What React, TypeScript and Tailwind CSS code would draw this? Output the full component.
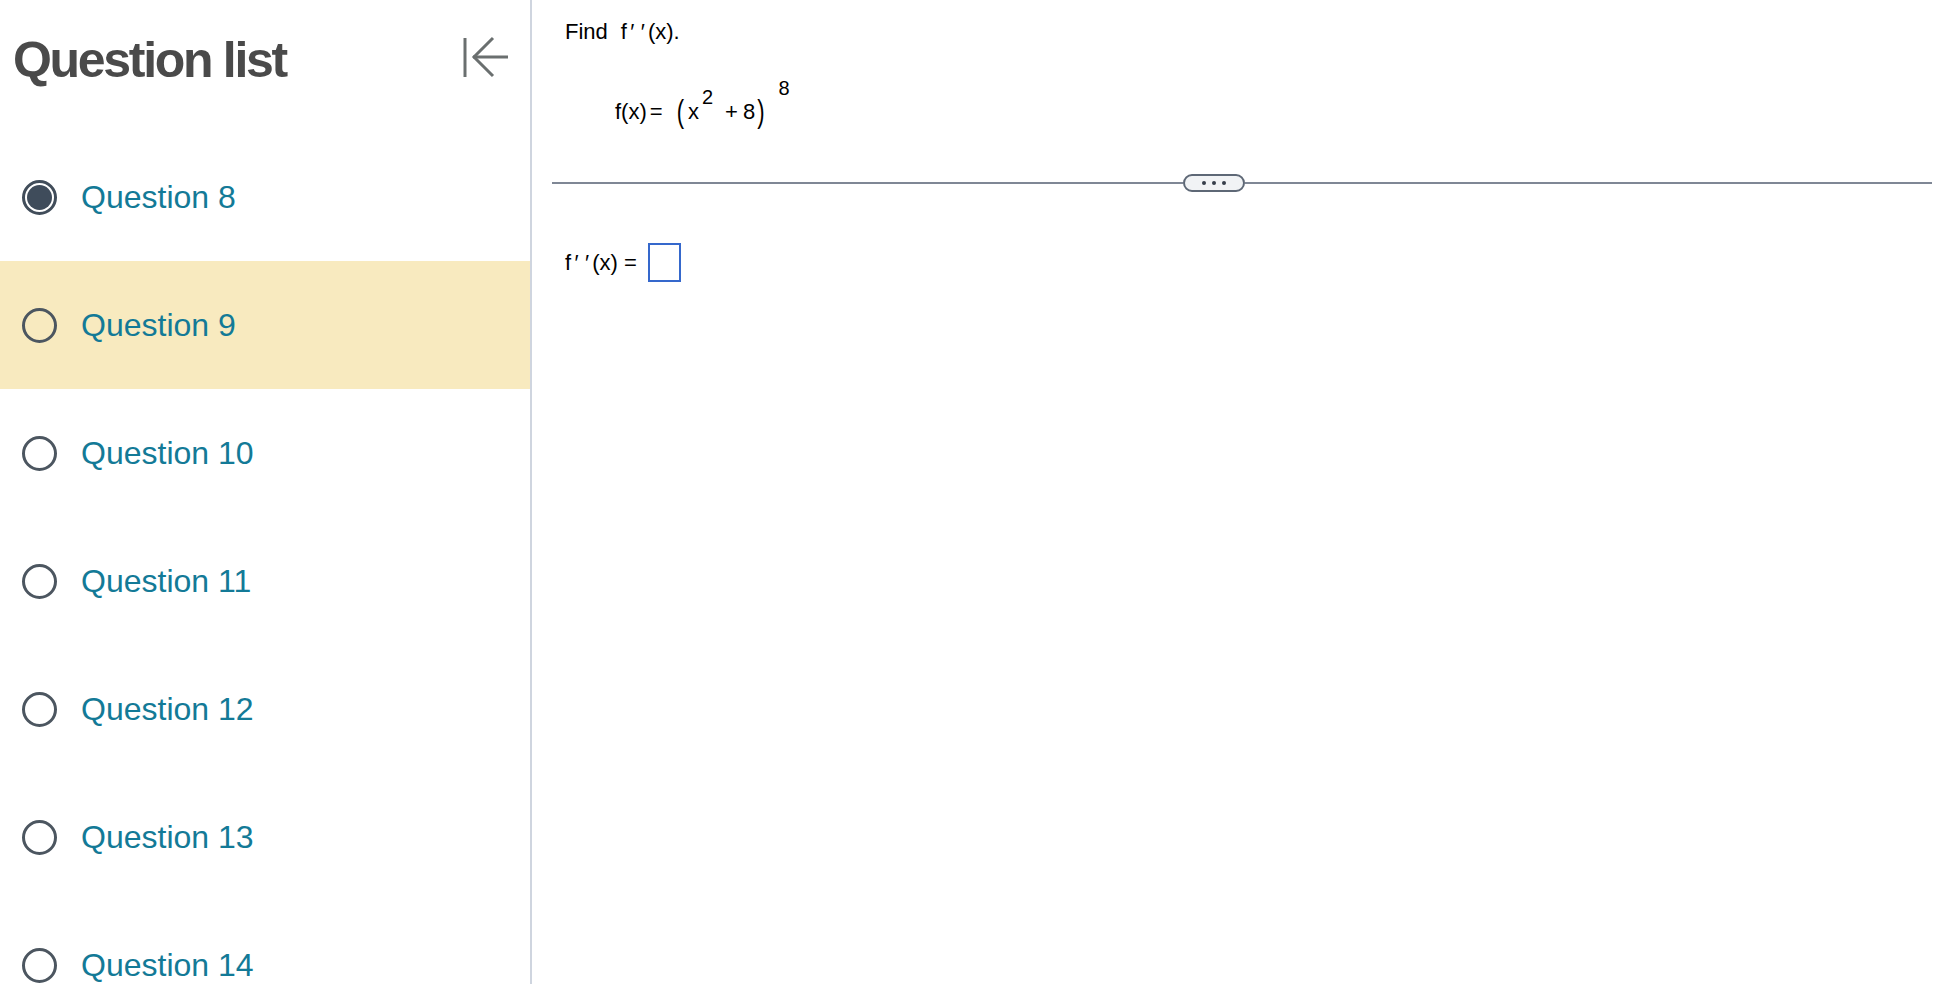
import React from "react";

const questions = [8, 9, 10, 11, 12, 13, 14];

function Radio({ checked }: { checked: boolean }) {
  if (checked) {
    return (
      <div className="flex h-[35px] w-[35px] shrink-0 rounded-full border-[3px] border-[#414d5a] bg-white p-[2px]">
        <div className="h-full w-full rounded-full bg-[#3f4c5b]" />
      </div>
    );
  }
  return <div className="h-[35px] w-[35px] shrink-0 rounded-full border-[3px] border-[#4c5660] bg-transparent" />;
}

function CollapseIcon() {
  return (
    <svg width="48" height="44" viewBox="0 0 48 44" fill="none" stroke="#6a6f6f" strokeWidth="3">
      <line x1="3" y1="3" x2="3" y2="42" />
      <line x1="11" y1="22" x2="46" y2="22" />
      <polyline points="31,3 12,22 31,41" />
    </svg>
  );
}

// f with two separated prime marks, as the math renderer draws it
function FPrimePrime() {
  return (
    <>
      f<span className="inline-block w-[11px] text-center">′</span>
      <span className="inline-block w-[10px] text-center">′</span>
    </>
  );
}

export default function App() {
  return (
    <div className="flex h-[984px] w-[1944px] overflow-hidden bg-white font-['Liberation_Sans',Arial,sans-serif]">
      {/* Sidebar */}
      <aside className="flex w-[532px] shrink-0 flex-col border-r-2 border-[#cfd5df]">
        <div className="flex h-[133px] shrink-0 items-start justify-between pl-[13px] pr-[20px]">
          <h1 className="pt-[35px] text-[50px] font-bold leading-none tracking-[-2.3px] text-[#4a4a4a]">
            Question list
          </h1>
          <div className="mt-[35px]">
            <CollapseIcon />
          </div>
        </div>
        {questions.map((q) => (
          <div
            key={q}
            className={`flex h-[128px] shrink-0 items-center gap-[24px] pl-[22px] ${
              q === 9 ? "bg-[#f8eabf]" : ""
            }`}
          >
            <Radio checked={q === 8} />
            <span className="text-[32px] leading-none text-[#137a97]">Question {q}</span>
          </div>
        ))}
      </aside>

      {/* Question pane */}
      <main className="flex flex-1 flex-col pl-[20px] pr-[12px] text-black">
        <p className="pl-[13px] pt-[19px] text-[22px] leading-[25px] whitespace-nowrap">
          Find
          <span className="ml-[13px]">
            <FPrimePrime />
          </span>
          (x).
        </p>

        <div className="mt-[34px] pl-[63px] text-[22px] leading-[25px] whitespace-nowrap">
          <span>f(x)</span>
          <span className="ml-[3px]">=</span>
          <span className="ml-[14px] inline-block scale-y-[1.4]">(</span>
          <span className="ml-[4px]">x</span>
          <span className="ml-[3px] align-[15px] text-[20px] leading-none">2</span>
          <span className="ml-[12px]">+</span>
          <span className="ml-[5px]">8</span>
          <span className="ml-[2px] inline-block scale-y-[1.4]">)</span>
          <span className="ml-[14px] align-[24px] text-[20px] leading-none">8</span>
        </div>

        <div className="mt-[50px] flex items-center">
          <div className="h-[2px] w-[631px] bg-[#7f8795]" />
          <div className="flex h-[18px] w-[62px] shrink-0 items-center justify-center gap-[6px] rounded-full border-2 border-[#5e6876] bg-[#f1f3f5]">
            <span className="h-[4px] w-[4px] rounded-full bg-[#363e4a]" />
            <span className="h-[4px] w-[4px] rounded-full bg-[#363e4a]" />
            <span className="h-[4px] w-[4px] rounded-full bg-[#363e4a]" />
          </div>
          <div className="h-[2px] flex-1 bg-[#7f8795]" />
        </div>

        <div className="mt-[51px] flex items-center gap-[11px] pl-[13px]">
          <span className="text-[22px] leading-[25px] whitespace-nowrap">
            <FPrimePrime />(x) =
          </span>
          <div className="h-[39px] w-[33px] border-2 border-[#3568cc]" />
        </div>
      </main>
    </div>
  );
}
